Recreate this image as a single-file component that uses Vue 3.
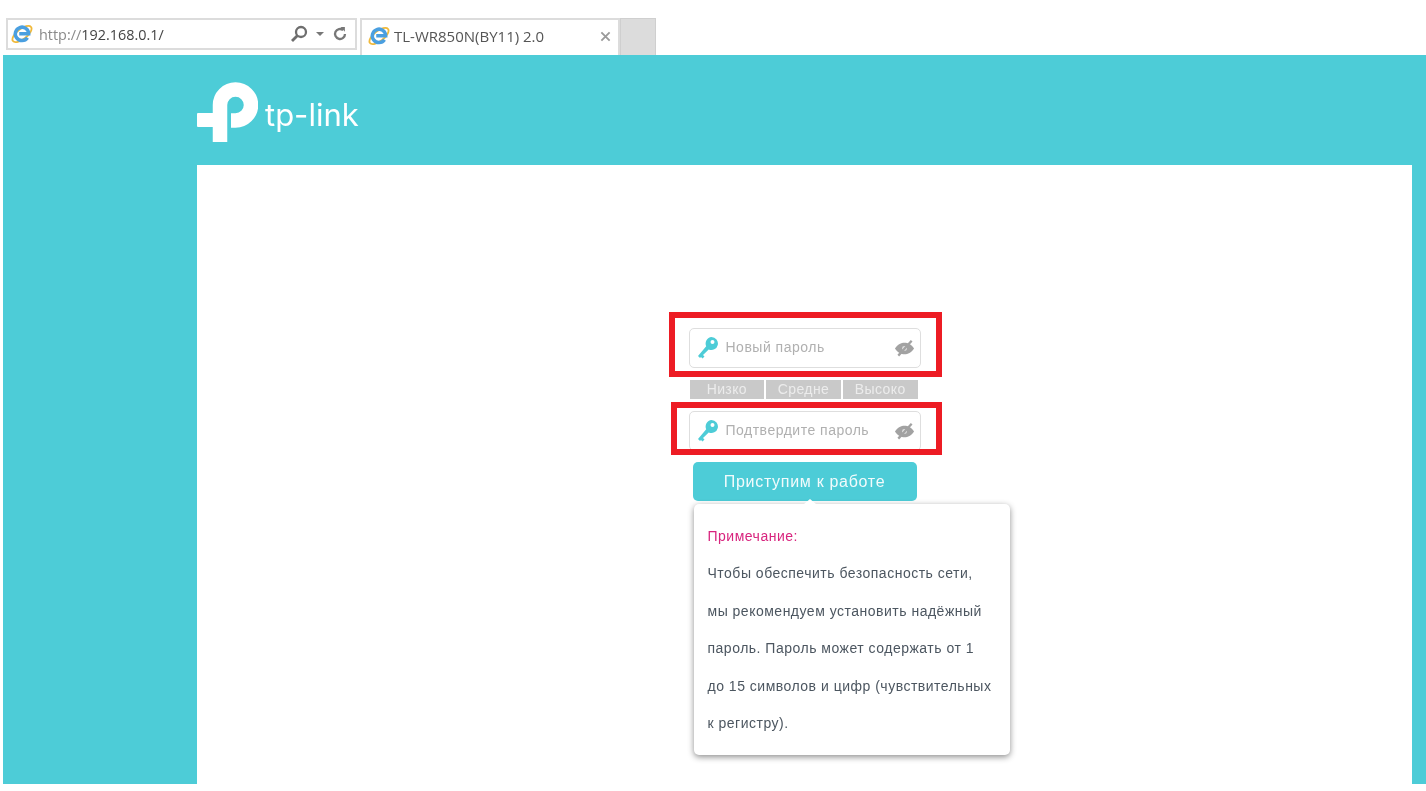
<template>
  <div class="screen">
    <div class="browser">
      <div class="address">
        <svg class="ie" viewBox="0 0 24 24">
          <ellipse cx="12" cy="12" rx="12.500" ry="5.500" transform="rotate(-38 12 12)" fill="none" stroke="#f0b93a" stroke-width="2" />
          <path d="M18 16a7.300 7.300 0 1 1 1.300-4.300H9" fill="none" stroke="#4a9fe0" stroke-width="3.800" />
        </svg>
        <span class="url"><span class="proto">http://</span>192.168.0.1/</span>
        <svg class="tool search" viewBox="0 0 18 18">
          <circle cx="11" cy="7" r="5" fill="none" stroke="#6e6e6e" stroke-width="2.300" />
          <path d="M7.500 10.500 2 16" stroke="#6e6e6e" stroke-width="2.800" />
        </svg>
        <span class="caret"></span>
        <svg class="tool reload" viewBox="0 0 18 18">
          <path d="M12.500 4.600A5.600 5.600 0 1 0 14.600 9" fill="none" stroke="#777" stroke-width="2.600" />
          <path d="M9.500 1 14.500 1 14.500 6.500z" fill="#777" />
        </svg>
      </div>
      <div class="tab">
        <svg class="ie" viewBox="0 0 24 24">
          <ellipse cx="12" cy="12" rx="12.500" ry="5.500" transform="rotate(-38 12 12)" fill="none" stroke="#f0b93a" stroke-width="2" />
          <path d="M18 16a7.300 7.300 0 1 1 1.300-4.300H9" fill="none" stroke="#4a9fe0" stroke-width="3.800" />
        </svg>
        <span class="tab-title">TL-WR850N(BY11) 2.0</span>
        <svg class="close" viewBox="0 0 12 12">
          <path d="M1.500 1.500 10.500 10.500M10.500 1.500 1.500 10.500" stroke="#9a9a9a" stroke-width="2" />
        </svg>
      </div>
      <div class="new-tab"></div>
    </div>

    <div class="page">
      <header class="head">
        <svg class="logo-mark" viewBox="0 0 61 60">
          <path d="M23 60V23a15.500 15.500 0 1 1 15.500 15.500H34" fill="none" stroke="#fff" stroke-width="14.500" />
          <rect x="0" y="31" width="30" height="14" rx="1" fill="#fff" />
        </svg>
        <span class="logo-text">tp-link</span>
      </header>

      <main class="panel">
        <div class="form">
          <div
            v-for="(field, index) in fields"
            :key="field.text"
            class="field"
            :class="field.cls"
          >
            <svg class="key" viewBox="0 0 20 22">
              <path
                fill-rule="evenodd"
                d="M13.500 0a6.500 6.500 0 1 1-2.800 12.400L5 18l1.500 1.500-2 2L3 20l-1 1-2-2 8.200-9.800A6.500 6.500 0 0 1 13.500 0zm1 3a2 2 0 1 0 0 4 2 2 0 0 0 0-4z"
                fill="#4dccd7"
              />
            </svg>
            <input class="pass" type="password" :placeholder="field.text" />
            <svg class="eye" viewBox="0 0 22 18">
              <path d="M1 9.500C4 5 7.500 3.500 11 3.500s7 1.500 10 6c-3 4.500-6.500 6-10 6s-7-1.500-10-6z" fill="#a2a2a2" />
              <circle cx="11" cy="9.500" r="2.600" fill="#e2e2e2" />
              <path d="M4.500 17 18.500 1.500" stroke="#a2a2a2" stroke-width="2.400" />
            </svg>
            <span class="mark"></span>
            <div v-if="index === 0" class="strength">
              <span v-for="level in levels" :key="level">{{ level }}</span>
            </div>
          </div>

          <button class="start">Приступим к работе</button>

          <div class="note">
            <p class="note-title">Примечание:</p>
            <p v-for="line in noteLines" :key="line">{{ line }}</p>
          </div>
        </div>
      </main>
    </div>
  </div>
</template>

<script setup>
const fields = [
  { text: 'Новый пароль', cls: 'first' },
  { text: 'Подтвердите пароль', cls: 'second' }
]

const levels = ['Низко', 'Средне', 'Высоко']

const noteLines = [
  'Чтобы обеспечить безопасность сети,',
  'мы рекомендуем установить надёжный',
  'пароль. Пароль может содержать от 1',
  'до 15 символов и цифр (чувствительных',
  'к регистру).'
]
</script>

<style>
html,
body {
  background: #fff;
  overflow: hidden;
}
</style>

<style scoped>
.screen {
  width: 1426px;
  height: 791px;
  background: #fff;
  font-family: 'Liberation Sans', Arial, sans-serif;
  filter: blur(0.5px);
}

.browser {
  display: flex;
  align-items: flex-end;
  height: 55px;
  box-sizing: border-box;
  padding-left: 6px;
}

.address {
  display: flex;
  align-items: center;
  width: 351px;
  height: 32px;
  margin-bottom: 5px;
  box-sizing: border-box;
  border: 2px solid #dcdcdc;
  padding-left: 3px;
}

.ie {
  width: 22px;
  height: 22px;
  flex: none;
}

.url {
  margin-left: 6px;
  font-family: 'Open Sans', sans-serif;
  font-size: 14.400px;
  color: #444;
  white-space: nowrap;
}

.proto {
  color: #8a8a8a;
}

.tool {
  flex: none;
}

.search {
  width: 18px;
  height: 18px;
  margin-left: auto;
}

.caret {
  width: 0;
  height: 0;
  margin: 0 8px;
  border-left: 4px solid transparent;
  border-right: 4px solid transparent;
  border-top: 4px solid #777;
}

.reload {
  width: 16px;
  height: 16px;
  margin-right: 7px;
}

.tab {
  display: flex;
  align-items: center;
  width: 260px;
  height: 37px;
  margin-left: 3px;
  box-sizing: border-box;
  border: 2px solid #dcdcdc;
  border-bottom: 0;
  padding: 0 7px 3px 6px;
}

.tab-title {
  margin-left: 4px;
  font-family: 'Open Sans', sans-serif;
  font-size: 15px;
  color: #555;
  white-space: nowrap;
}

.close {
  width: 11px;
  height: 11px;
  margin-left: auto;
}

.new-tab {
  width: 36px;
  height: 37px;
  box-sizing: border-box;
  border: 1px solid #cfcfcf;
  border-bottom: 0;
  background: #dcdcdc;
}

.page {
  display: flex;
  flex-direction: column;
  height: 729px;
  margin-left: 3px;
  background: #4dccd7;
}

.head {
  display: flex;
  align-items: flex-start;
  flex: none;
  height: 110px;
  padding: 27px 0 0 194px;
  box-sizing: border-box;
}

.logo-mark {
  width: 61px;
  height: 60px;
  flex: none;
}

.logo-text {
  margin: 11px 0 0 7px;
  font-family: 'Inter', sans-serif;
  font-weight: 400;
  font-size: 31px;
  line-height: 44px;
  color: #fff;
}

.panel {
  display: flex;
  justify-content: center;
  flex: 1;
  margin: 0 14px 0 194px;
  padding-top: 163px;
  background: #fff;
}

.form {
  display: flex;
  flex-direction: column;
  align-items: flex-start;
  width: 232px;
}

.field {
  position: relative;
  display: flex;
  align-items: center;
  width: 232px;
  height: 40px;
  box-sizing: border-box;
  border: 1px solid #dedede;
  border-radius: 5px;
  background: #fff;
}

.field.first {
  margin-bottom: 43px;
}

.field.second {
  margin-bottom: 11px;
  padding-bottom: 1px;
}

.key {
  flex: none;
  width: 20px;
  height: 22px;
  margin-left: 8px;
}

.pass {
  flex: 1;
  min-width: 0;
  height: 100%;
  margin-left: 8px;
  padding: 0 0 2px;
  box-sizing: border-box;
  border: 0;
  outline: 0;
  background: transparent;
  font-family: 'Liberation Sans', Arial, sans-serif;
  font-size: 14px;
  letter-spacing: 0.5px;
}

.pass::placeholder {
  color: #b0b0b0;
  opacity: 1;
}

.eye {
  flex: none;
  width: 21px;
  height: 18px;
  margin: 0 5px 0 4px;
}

/* красная рамка поверх поля */
.mark {
  position: absolute;
  box-sizing: border-box;
  border: 6px solid #ed1c24;
  pointer-events: none;
}

.first .mark {
  top: -17px;
  bottom: -10px;
  left: -21px;
  right: -22px;
}

.second .mark {
  top: -10px;
  bottom: -5px;
  left: -19px;
  right: -22px;
}

.strength {
  position: absolute;
  top: 51px;
  left: 0;
  display: flex;
  gap: 2px;
  width: 228px;
}

.strength span {
  flex: 1;
  height: 19px;
  background: #c9c9c9;
  color: #ececec;
  font-size: 14px;
  letter-spacing: 0.4px;
  line-height: 19px;
  text-align: center;
}

.start {
  width: 224px;
  height: 39px;
  margin-left: 4px;
  padding: 0;
  border: 0;
  border-radius: 5px;
  background: #4dccd7;
  color: #f2fbfc;
  font-family: 'Liberation Sans', Arial, sans-serif;
  font-size: 16px;
  letter-spacing: 0.7px;
}

.note {
  position: relative;
  flex: none;
  width: 316px;
  height: 251px;
  margin: 3px 0 0 5px;
  padding-top: 14px;
  box-sizing: border-box;
  border-radius: 5px;
  background: #fff;
  box-shadow: 0 2px 6px rgba(0, 0, 0, 0.45);
  color: #4c5660;
  font-size: 14px;
  letter-spacing: 0.5px;
}

.note::before {
  content: '';
  position: absolute;
  top: -5px;
  left: 110px;
  width: 0;
  height: 0;
  border-left: 6px solid transparent;
  border-right: 6px solid transparent;
  border-bottom: 5px solid #fff;
}

.note p {
  margin: 0 0 0 14px;
  line-height: 37.400px;
  white-space: nowrap;
}

.note .note-title {
  color: #d8247e;
}
</style>
